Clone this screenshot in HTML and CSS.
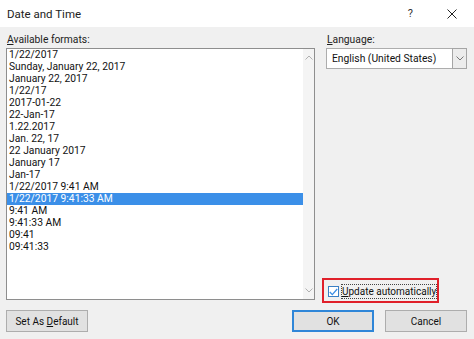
FILE: index.html
```html
<!DOCTYPE html>
<html lang="en">
<head>
  <meta charset="UTF-8">
  <title>Date and Time</title>
  <link rel="stylesheet" href="styles.css">
</head>
<body>
  <div class="dialog">
    <header class="titlebar">
      <span class="title">Date and Time</span>
      <span class="help">?</span>
      <svg class="close" width="10" height="10" viewBox="0 0 10 10">
        <path d="M0.5 0.5L9.5 9.5M9.5 0.5L0.5 9.5" stroke="#222" stroke-width="1" fill="none"/>
      </svg>
    </header>

    <main class="content">
      <section class="left-col">
        <div class="label"><u>A</u>vailable formats:</div>
        <div class="listbox">
          <ul class="formats">
            <li>1/22/2017</li>
            <li>Sunday, January 22, 2017</li>
            <li>January 22, 2017</li>
            <li>1/22/17</li>
            <li>2017-01-22</li>
            <li>22-Jan-17</li>
            <li>1.22.2017</li>
            <li>Jan. 22, 17</li>
            <li>22 January 2017</li>
            <li>January 17</li>
            <li>Jan-17</li>
            <li>1/22/2017 9:41 AM</li>
            <li class="selected">1/22/2017 9:41:33 AM</li>
            <li>9:41 AM</li>
            <li>9:41:33 AM</li>
            <li>09:41</li>
            <li>09:41:33</li>
          </ul>
          <div class="scrollbar">
            <svg width="8" height="5" viewBox="0 0 8 5"><path d="M0.5 4.5L4 1L7.5 4.5" stroke="#b0b0b0" fill="none"/></svg>
            <svg width="8" height="5" viewBox="0 0 8 5"><path d="M0.5 0.5L4 4L7.5 0.5" stroke="#b0b0b0" fill="none"/></svg>
          </div>
        </div>
      </section>

      <section class="right-col">
        <div class="label"><u>L</u>anguage:</div>
        <div class="combo">
          <span class="combo-text">English (United States)</span>
          <span class="combo-btn">
            <svg width="8" height="5" viewBox="0 0 8 5"><path d="M0.5 0.5L4 4L7.5 0.5" stroke="#777" fill="none"/></svg>
          </span>
        </div>
        <div class="highlight">
          <span class="checkbox">
            <svg width="9" height="8" viewBox="0 0 9 8"><path d="M0.8 4L3.3 6.6L8.2 1" stroke="#3a8ee6" stroke-width="1.3" fill="none"/></svg>
          </span>
          <span class="check-label"><u>U</u>pdate automatically</span>
        </div>
      </section>
    </main>

    <footer class="buttons">
      <button class="btn">Set As <u>D</u>efault</button>
      <div class="btn-group">
        <button class="btn btn-default">OK</button>
        <button class="btn">Cancel</button>
      </div>
    </footer>
  </div>
</body>
</html>
```

FILE: styles.css
```css
body {
  margin: 0;
  background: #f0f0f0;
  font-family: Roboto, "Noto Sans", sans-serif;
  font-size: 10.3px;
  color: #111;
}

.dialog {
  width: 474px;
  height: 339px;
  overflow: hidden;
}

.titlebar {
  height: 27px;
  background: #fff;
  display: flex;
  align-items: center;
  padding: 0 17px 0 7px;
}

.title {
  font-size: 11.5px;
  color: #222;
  flex: 1;
}

.help {
  font-size: 11px;
  color: #333;
  margin-right: 34px;
}

.content {
  display: grid;
  grid-template-columns: 309px 141px;
  column-gap: 11px;
  padding: 7px 7px 0 6px;
}

.label {
  height: 12px;
  line-height: 12px;
  margin-bottom: 2px;
  padding-left: 1px;
  color: #222;
}

.listbox {
  height: 252px;
  box-sizing: border-box;
  border: 1px solid #8e8e8e;
  background: #fff;
  display: flex;
}

.formats {
  list-style: none;
  margin: 0;
  padding: 0;
  flex: 1;
}

.formats li {
  height: 12px;
  line-height: 12px;
  padding-left: 2px;
  white-space: nowrap;
}

.formats li.selected {
  background: #3b8fe8;
  color: #fff;
}

.scrollbar {
  width: 11px;
  background: #f4f4f4;
  display: flex;
  flex-direction: column;
  justify-content: space-between;
  align-items: center;
  padding: 6px 0 6px;
}

.right-col {
  display: flex;
  flex-direction: column;
}

.combo {
  height: 21px;
  box-sizing: border-box;
  border: 1px solid #adadad;
  background: #fff;
  display: flex;
  align-items: center;
}

.combo-text {
  flex: 1;
  padding-left: 5px;
}

.combo-btn {
  width: 15px;
  height: 21px;
  margin: -1px -1px -1px 0;
  box-sizing: border-box;
  border: 1px solid #a5a5a5;
  background: #ececec;
  display: flex;
  align-items: center;
  justify-content: center;
}

.highlight {
  margin: auto 0 -3px -4px;
  width: 117px;
  height: 25px;
  box-sizing: border-box;
  border: 2px solid #e0202a;
  display: flex;
  align-items: center;
  padding: 2px 0 0 4px;
  white-space: nowrap;
  font-size: 10px;
}

.checkbox {
  flex: none;
  width: 11px;
  height: 11px;
  box-sizing: border-box;
  border: 1px solid #3a7fc4;
  background: #fff;
  display: flex;
  align-items: center;
  justify-content: center;
  margin-right: 2px;
}

.check-label {
  border: 1px dotted #444;
  line-height: 13px;
  padding: 0;
}

.buttons {
  display: flex;
  justify-content: space-between;
  padding: 10px 7px 0 6px;
}

.btn-group {
  display: flex;
  gap: 11px;
}

.btn {
  width: 82px;
  height: 22px;
  border: 1px solid #adadad;
  background: #e1e1e1;
  font-family: inherit;
  font-size: 10px;
  color: #111;
  padding: 0;
}

.btn-default {
  border: 2px solid #2f86d8;
}
```
